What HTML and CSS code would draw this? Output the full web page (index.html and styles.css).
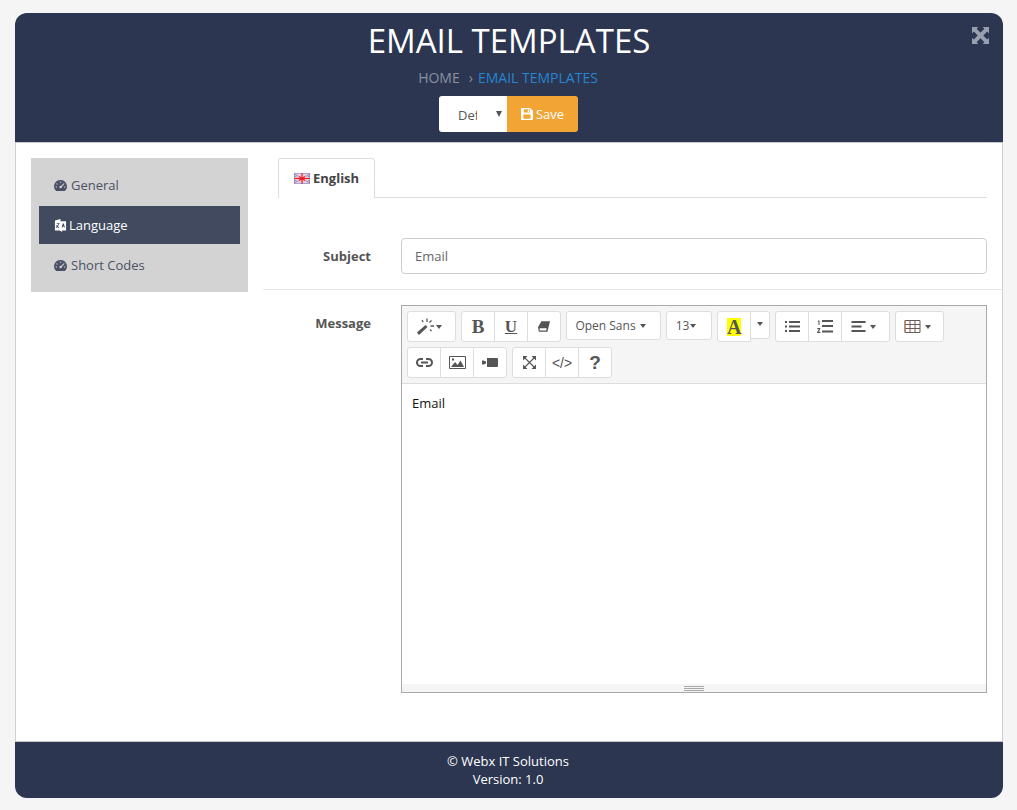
FILE: index.html
```html
<!DOCTYPE html>
<html lang="en">
<head>
<meta charset="utf-8">
<title>Email Templates</title>
<link rel="stylesheet" href="styles.css">
</head>
<body>
<div class="page">
  <header class="head">
    <h1 class="title">EMAIL TEMPLATES</h1>
    <div class="crumbs"><span class="crumb-home">HOME</span><span class="crumb-sep">›</span><span class="crumb-cur">EMAIL TEMPLATES</span></div>
    <div class="actions">
      <div class="select"><span class="select-text">Default</span><span class="select-caret"></span></div>
      <button class="save" type="button">
        <svg class="save-ico" viewBox="0 0 13 13"><path fill="currentColor" fill-rule="evenodd" d="M1 0h9l3 3v9a1 1 0 0 1-1 1H1a1 1 0 0 1-1-1V1a1 1 0 0 1 1-1zm2 1.400v3.400h6.400V1.400H3zm4.400.5h1.200v2.300H7.400V1.900zM2.600 7v4.700h7.800V7H2.600z"/></svg>
        Save
      </button>
    </div>
    <svg class="expand" viewBox="0 0 16 16"><path fill="currentColor" d="M0 0h6L4.300 1.700 8 5.400l3.700-3.700L10 0h6v6l-1.700-1.700L10.600 8l3.700 3.700L16 10v6h-6l1.700-1.700L8 10.600l-3.700 3.700L6 16H0v-6l1.700 1.700L5.400 8 1.700 4.300 0 6z"/></svg>
  </header>

  <main class="body">
    <nav class="side">
      <a class="side-item">
        <svg class="side-ico" viewBox="0 0 14 12"><path fill="currentColor" fill-rule="evenodd" d="M7 0a7 7 0 0 1 6 10.600 1 1 0 0 1-.8.4v1H1.800v-1a1 1 0 0 1-.8-.4A7 7 0 0 1 7 0zM6.300 1.800v1.300h1.400V1.800H6.300zM3 3.500l-.8.9 1 .9.900-.9-1.100-.9zM10.800 3.400 7.500 6.500a1.300 1.300 0 1 0 .9 1L11.400 4l-.6-.6zM1.700 7v1.300h1.500V7H1.700zm9.100 0v1.300h1.500V7h-1.500z"/></svg>
        General
      </a>
      <a class="side-item side-item-on">
        <svg class="side-ico side-ico-lang" viewBox="0 0 14 14"><path fill="currentColor" d="M1 1.500 7 0v2.500h6v10H8.500l.5 1.500-3-1.500H1z"/><path fill="#414a5e" d="M3 4.500h3v1H5.200c-.1 1-.4 1.800-.9 2.500l1.400.9-.4.900-1.700-1.100-1.300 1-.5-.8 1.200-1c-.3-.4-.5-.8-.6-1.300h1c.1.300.2.500.3.700.3-.5.500-1.100.6-1.800H3zM9.400 4.800h1.200l1.100 4.400h-1l-.2-1H9.500l-.2 1h-1z"/></svg>
        Language
      </a>
      <a class="side-item">
        <svg class="side-ico" viewBox="0 0 14 12"><path fill="currentColor" fill-rule="evenodd" d="M7 0a7 7 0 0 1 6 10.600 1 1 0 0 1-.8.4v1H1.800v-1a1 1 0 0 1-.8-.4A7 7 0 0 1 7 0zM6.300 1.800v1.300h1.400V1.800H6.300zM3 3.500l-.8.9 1 .9.900-.9-1.100-.9zM10.800 3.400 7.500 6.500a1.300 1.300 0 1 0 .9 1L11.400 4l-.6-.6zM1.700 7v1.300h1.500V7H1.700zm9.100 0v1.300h1.500V7h-1.500z"/></svg>
        Short Codes
      </a>
    </nav>

    <section class="panel">
      <div class="tabs">
        <div class="tab">
          <svg class="flag" viewBox="0 0 16 11"><rect width="16" height="11" fill="#d5d3ee"/><path stroke="#7d80c8" stroke-width="1" d="M0 3l5 2.500M16 3l-5 2.500M0 8l5-2.500M16 8l-5-2.500M0 1l4 2M16 1l-4 2M0 10l4-2M16 10l-4-2"/><path stroke="#f6a3ab" stroke-width="1" d="M0 0l16 11M16 0 0 11"/><path stroke="#f9c0c4" stroke-width="3" d="M8 0v11M0 5.500h16"/><path stroke="#ee1c25" stroke-width="1.200" d="M8 0v11M0 5.500h16M5 3.500l6 4M11 3.500l-6 4"/><rect x=".3" y=".3" width="15.400" height="10.400" fill="none" stroke="#6a6fb5" stroke-width=".6" stroke-opacity=".7"/></svg>
          English
        </div>
      </div>

      <div class="row row-subject">
        <label class="label">Subject</label>
        <div class="input">Email</div>
      </div>

      <div class="row row-message">
        <label class="label">Message</label>
        <div class="editor">
          <div class="toolbar">
            <div class="tb-line">
              <div class="group">
                <button class="btn btn-magic" type="button">
                  <svg class="ico-magic" viewBox="0 0 17 17"><path fill="currentColor" d="M0 14.500 8.500 7l2 2L2 17z"/><path stroke="currentColor" stroke-width="1.300" d="M10 .5v3.500M14.500 2.500 12.500 4.500M17 8h-3.500M14.500 13 13 11.500M5 2l1.200 2"/></svg><span class="caret caret-m"></span>
                </button>
              </div>
              <div class="group">
                <button class="btn btn-sq tx-b" type="button">B</button>
                <button class="btn btn-sq tx-u" type="button">U</button>
                <button class="btn btn-sq" type="button">
                  <svg class="ico-eraser" viewBox="0 0 14 12"><path fill="currentColor" fill-rule="evenodd" d="M4 0h10l-3 12H1L0 7zM2 8l-.2 2.600h7.700L10.100 8z"/></svg>
                </button>
              </div>
              <div class="group">
                <button class="btn btn-short btn-font" type="button">Open Sans<span class="caret caret-gap"></span></button>
              </div>
              <div class="group">
                <button class="btn btn-short btn-size" type="button">13<span class="caret"></span></button>
              </div>
              <div class="group group-color">
                <button class="btn btn-color" type="button"><span class="hl">A</span></button>
                <button class="btn btn-color-caret" type="button"><span class="caret"></span></button>
              </div>
              <div class="group">
                <button class="btn btn-sq" type="button">
                  <svg class="ico-list" viewBox="0 0 15 11"><path fill="currentColor" d="M0 0h2v2H0zM4 0h11v2H4zM0 4.500h2v2H0zM4 4.500h11v2H4zM0 9h2v2H0zM4 9h11v2H4z"/></svg>
                </button>
                <button class="btn btn-sq" type="button">
                  <svg class="ico-ol" viewBox="0 0 16 13"><path fill="currentColor" d="M5 0h11v2H5zM5 5h11v2H5zM5 10.500h11v2H5zM1.300.5h1.200v4.500H1.500V1.700H.7zM.3 8h3v1L1.700 11.800h1.700V13H.2v-1L2 9.200H.3z"/></svg>
                </button>
                <button class="btn btn-align" type="button">
                  <svg class="ico-list" viewBox="0 0 14 11"><path fill="currentColor" d="M0 0h14v2H0zM0 4.500h10v2H0zM0 9h14v2H0z"/></svg><span class="caret caret-gap"></span>
                </button>
              </div>
              <div class="group">
                <button class="btn btn-table" type="button">
                  <svg class="ico-table" viewBox="0 0 16 13"><path fill="none" stroke="#6a5c55" d="M.5.500h15v12H.5zM.5 4.500h15M.5 8.500h15M5.500.5v12M10.500.5v12"/><path stroke="#c07a45" d="M.5.500v12"/></svg><span class="caret caret-gap"></span>
                </button>
              </div>
            </div>
            <div class="tb-line">
              <div class="group">
                <button class="btn btn-sq" type="button">
                  <svg class="ico-link" viewBox="0 0 17 9"><path fill="none" stroke="currentColor" stroke-width="2" d="M7 1H4.500a3.500 3.500 0 0 0 0 7H7M10 1h2.500a3.500 3.500 0 0 1 0 7H10M5 4.500h7"/></svg>
                </button>
                <button class="btn btn-sq" type="button">
                  <svg class="ico-pic" viewBox="0 0 17 13"><path fill="none" stroke="currentColor" d="M.5.500h16v12H.5z"/><path fill="currentColor" d="M2 11l4-5 2.500 3 3-4.500 3.500 6.500zM3 2.500h2v2H3z"/></svg>
                </button>
                <button class="btn btn-sq" type="button">
                  <svg class="ico-vid" viewBox="0 0 16 9"><path fill="currentColor" d="M5 0h10a1 1 0 0 1 1 1v7a1 1 0 0 1-1 1H5zM0 2.500h1.500L4 3.500v2L1.500 6.500H0z"/></svg>
                </button>
              </div>
              <div class="group">
                <button class="btn btn-sq" type="button">
                  <svg class="ico-full" viewBox="0 0 13 13"><path fill="currentColor" d="M0 0h4.500L0 4.500zM13 0v4.500L8.500 0zM0 13V8.500L4.500 13zM13 13H8.500L13 8.500z"/><path fill="none" stroke="currentColor" stroke-width="1.100" d="M2 2l9 9M11 2l-9 9"/></svg>
                </button>
                <button class="btn btn-sq tx-code" type="button">&lt;/&gt;</button>
                <button class="btn btn-sq tx-help" type="button">?</button>
              </div>
            </div>
          </div>
          <div class="content">Email</div>
          <div class="status"><span class="grip"></span></div>
        </div>
      </div>
    </section>
  </main>

  <footer class="foot">
    <div>© Webx IT Solutions</div>
    <div>Version: 1.0</div>
  </footer>
</div>
</body>
</html>
```
FILE: styles.css
```css
* { box-sizing: border-box; }
html, body { margin: 0; padding: 0; }
body {
  background: #f5f5f5;
  font-family: "Open Sans", sans-serif;
  font-size: 13px;
  color: #555;
  height: 810px;
  overflow: hidden;
}
.page {
  width: 988px;
  height: 785px;
  margin: 13px 0 0 15px;
  display: flex;
  flex-direction: column;
  border-radius: 12px;
  overflow: hidden;
  background: #fff;
}
.head {
  position: relative;
  height: 130px;
  flex: none;
  background: #2c3651;
  text-align: center;
  border-bottom: 1px solid #c8c8c8;
  padding-top: 5px;
}
.title {
  margin: 0;
  font-size: 33px;
  font-weight: 400;
  line-height: 46px;
  color: #fff;
}
.crumbs {
  margin-top: 4px;
  height: 20px;
  line-height: 20px;
  font-size: 14px;
  display: flex;
  justify-content: center;
  padding-right: 2px;
}
.crumb-home { color: #8a90a0; }
.crumb-sep { color: #8a90a0; margin: 0 5px 0 9px; }
.crumb-cur { color: #2585d2; }
.actions {
  margin-top: 8px;
  display: flex;
  justify-content: center;
  padding-right: 1px;
}
.select {
  position: relative;
  width: 68px;
  height: 36px;
  background: #fff;
  border-radius: 3px 0 0 3px;
  text-align: left;
  padding-left: 19px;
  line-height: 38px;
  font-size: 13px;
  color: #555;
}
.select-text {
  display: block;
  width: 19px;
  overflow: hidden;
  white-space: nowrap;
}
.select-caret {
  position: absolute;
  right: 5px;
  top: 15px;
  border-left: 3px solid transparent;
  border-right: 3px solid transparent;
  border-top: 6px solid #555;
}
.save {
  width: 71px;
  height: 36px;
  border: 0;
  padding: 0;
  background: #f2a535;
  color: #fff;
  border-radius: 0 3px 3px 0;
  font: 400 13px "Open Sans", sans-serif;
  display: flex;
  align-items: center;
  justify-content: center;
  gap: 3px;
}
.save-ico { width: 12px; height: 12px; }
.expand {
  position: absolute;
  top: 14px;
  right: 14px;
  width: 17px;
  height: 17px;
  color: #98a0b0;
}
.body {
  flex: 1;
  display: flex;
  border-left: 1px solid #d0d0d0;
  border-right: 1px solid #d0d0d0;
  padding: 15px 0 0 15px;
}
.side {
  flex: none;
  width: 217px;
  height: 134px;
  background: #d3d3d3;
  padding: 8px;
}
.side-item {
  display: flex;
  align-items: center;
  height: 38px;
  margin-bottom: 2px;
  padding-left: 15px;
  gap: 4px;
  color: #4a5166;
  font-size: 13px;
}
.side-item-on { background: #414a5e; color: #fff; gap: 2px; }
.side-ico { width: 13px; height: 11px; }
.side-ico-lang { height: 13px; }
.panel {
  flex: 1;
  min-width: 0;
  padding-left: 15px;
}
.tabs {
  margin: 0 15px 0 15px;
  height: 40px;
  border-bottom: 1px solid #ddd;
}
.tab {
  width: 97px;
  height: 40px;
  background: #fff;
  border: 1px solid #ddd;
  border-bottom: 0;
  border-radius: 3px 3px 0 0;
  display: flex;
  align-items: center;
  padding: 0 0 2px 15px;
  gap: 3px;
  font-size: 13px;
  font-weight: 700;
  color: #444;
}
.flag { width: 16px; height: 11px; flex: none; margin-top: 2px; }
.row { display: flex; }
.row-subject {
  margin-top: 40px;
  padding-bottom: 15px;
  border-bottom: 1px solid #e8e8e8;
  height: 52px;
}
.row-message { margin-top: 15px; }
.label {
  flex: none;
  width: 108px;
  height: 36px;
  margin-right: 30px;
  text-align: right;
  font-weight: 700;
  font-size: 13px;
  line-height: 36px;
  color: #555;
}
.input {
  width: 586px;
  height: 36px;
  border: 1px solid #ccc;
  border-radius: 4px;
  padding-left: 13px;
  line-height: 34px;
  font-size: 13px;
  color: #666;
}
.editor {
  width: 586px;
  height: 388px;
  border: 1px solid #a9a9a9;
  display: flex;
  flex-direction: column;
}
.toolbar {
  flex: none;
  height: 78px;
  background: #f5f5f5;
  border-bottom: 1px solid #ddd;
  padding: 5px 0 0 5px;
}
.tb-line {
  display: flex;
  align-items: flex-start;
  gap: 5px;
  margin-bottom: 5px;
}
.group { display: flex; align-items: flex-start; }
.btn {
  height: 31px;
  padding: 0;
  background: #fff;
  border: 1px solid #ddd;
  margin-left: -1px;
  color: #555;
  font: 400 12px "Open Sans", sans-serif;
  display: flex;
  align-items: center;
  justify-content: center;
}
.group .btn:first-child { margin-left: 0; border-radius: 3px 0 0 3px; }
.group .btn:last-child { border-radius: 0 3px 3px 0; }
.group .btn:only-child { border-radius: 3px; }
.btn-sq { width: 34px; }
.btn-magic { width: 49px; padding-right: 4px; }
.btn-short { height: 29px; }
.btn-font { width: 95px; padding-right: 6px; }
.btn-size { width: 46px; padding-right: 6px; }
.btn-color { width: 34px; }
.btn-color-caret { width: 20px; height: 28px; }
.btn-align { width: 49px; padding-right: 4px; }
.btn-table { width: 49px; padding-right: 4px; }
.caret {
  display: inline-block;
  margin-left: 1px;
  border-left: 3px solid transparent;
  border-right: 3px solid transparent;
  border-top: 4px solid #555;
}
.caret-gap { margin-left: 4px; }
.caret-m { margin-left: 2px; }
.btn-color-caret .caret { margin: 0 0 2px 0; }
.tx-b { font: 700 19px "Liberation Serif", serif; }
.tx-u { font: 700 17px "Liberation Serif", serif; text-decoration: underline; }
.tx-code { font: 400 14px "Liberation Sans", sans-serif; }
.tx-help { font: 700 19px "Liberation Sans", sans-serif; }
.hl {
  display: block;
  width: 14px;
  height: 18px;
  background: #ffff00;
  font: 700 20px/19px "Liberation Serif", serif;
  color: #555;
  text-align: center;
}
.ico-magic { width: 17px; height: 17px; }
.ico-eraser { width: 12px; height: 11px; }
.ico-list { width: 15px; height: 11px; }
.ico-ol { width: 16px; height: 13px; }
.ico-table { width: 17px; height: 13px; }
.ico-link { width: 17px; height: 9px; }
.ico-pic { width: 17px; height: 13px; }
.ico-vid { width: 16px; height: 9px; }
.ico-full { width: 13px; height: 13px; }
.content {
  flex: 1;
  padding: 10px;
  line-height: 18px;
  font-size: 13px;
  color: #111;
}
.status {
  flex: none;
  height: 8px;
  background: #f5f5f5;
  display: flex;
  justify-content: center;
  align-items: center;
}
.grip {
  width: 20px;
  height: 5px;
  border-top: 1px solid #a9a9a9;
  border-bottom: 1px solid #a9a9a9;
  position: relative;
}
.grip::after {
  content: "";
  position: absolute;
  left: 0;
  right: 0;
  top: 1px;
  height: 1px;
  background: #a9a9a9;
}
.foot {
  flex: none;
  height: 57px;
  background: #2c3651;
  border-top: 1px solid #c8c8c8;
  color: #fff;
  text-align: center;
  font-size: 13px;
  font-weight: 500;
  line-height: 18px;
  padding: 10px 2px 0 0;
}
```
